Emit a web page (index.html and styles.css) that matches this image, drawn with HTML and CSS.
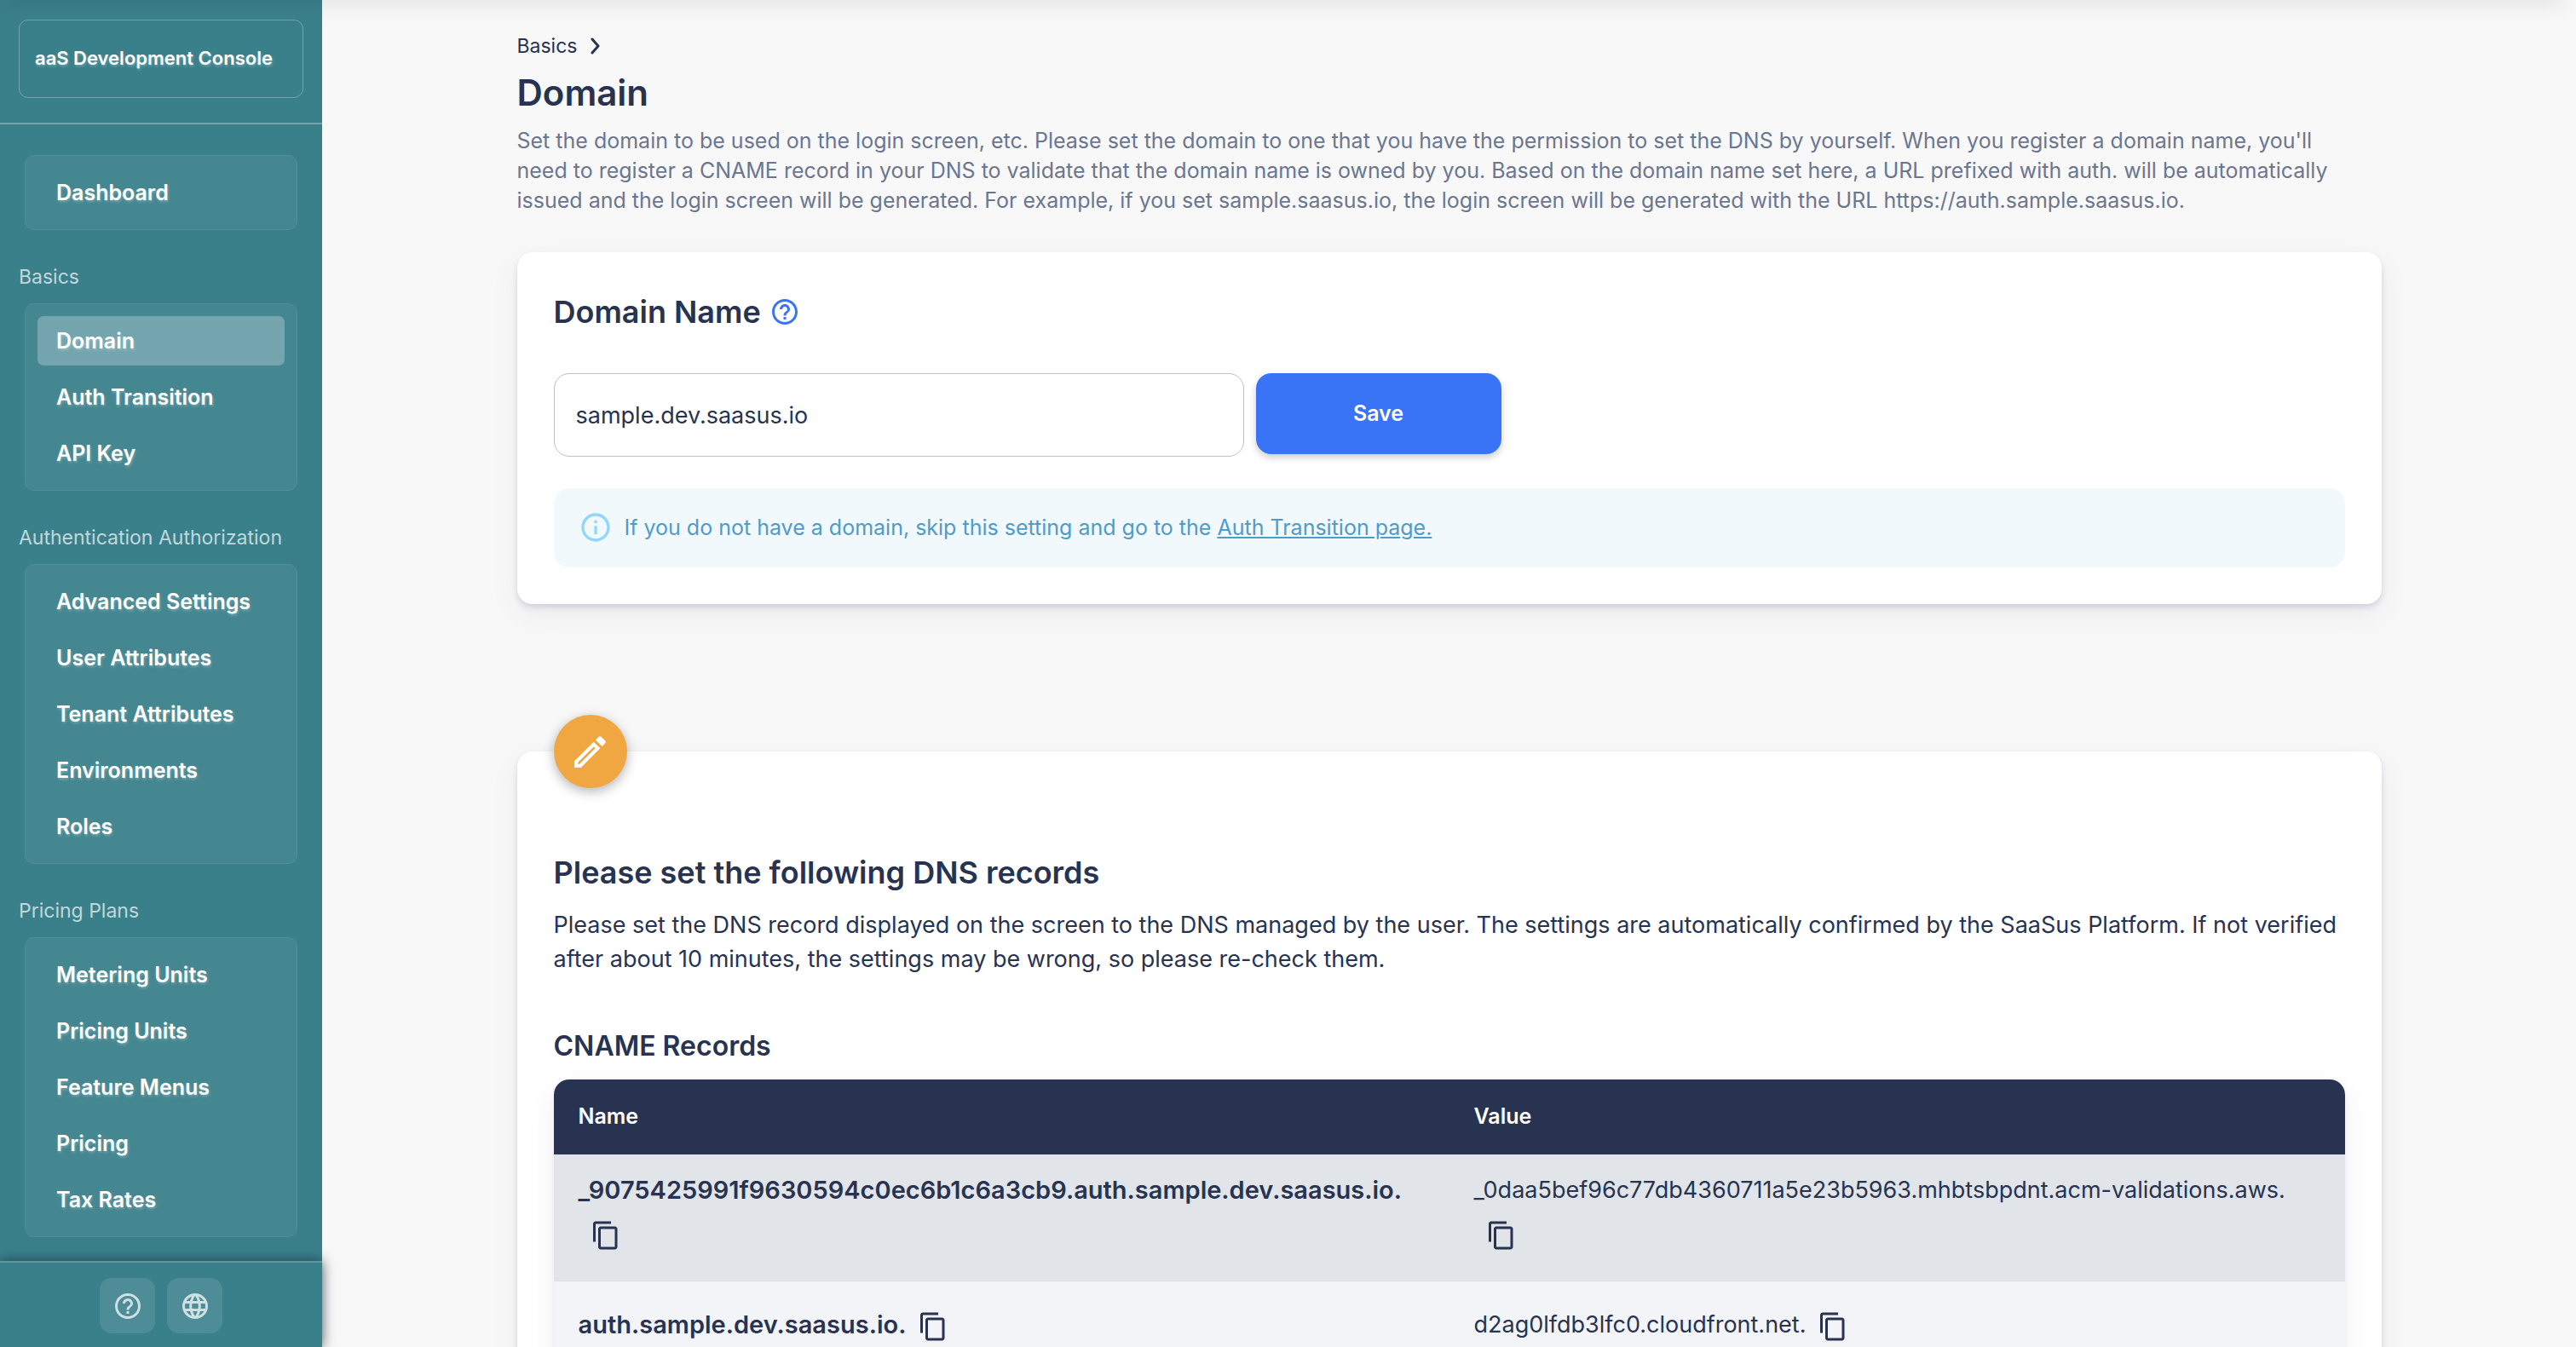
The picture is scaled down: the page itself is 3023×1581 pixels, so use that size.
FILE: index.html
```html
<!DOCTYPE html>
<html lang="en">
<head>
<meta charset="utf-8">
<meta name="viewport" content="width=device-width, initial-scale=1">
<title>Domain - SaaS Development Console</title>
<link rel="stylesheet" href="styles.css">
</head>
<body>
<svg class="sprite" aria-hidden="true">
  <symbol id="icon-help" viewBox="0 0 24 24"><path d="M11 18h2v-2h-2v2zm1-16C6.480 2 2 6.480 2 12s4.480 10 10 10 10-4.480 10-10S17.520 2 12 2zm0 18c-4.410 0-8-3.590-8-8s3.590-8 8-8 8 3.590 8 8-3.590 8-8 8zm0-14c-2.210 0-4 1.790-4 4h2c0-1.100.9-2 2-2s2 .9 2 2c0 2-3 1.750-3 5h2c0-2.250 3-2.500 3-5 0-2.210-1.790-4-4-4z"/></symbol>
  <symbol id="icon-info" viewBox="0 0 24 24"><path d="M11 7h2v2h-2zm0 4h2v6h-2zm1-9C6.480 2 2 6.480 2 12s4.480 10 10 10 10-4.480 10-10S17.520 2 12 2zm0 18c-4.410 0-8-3.590-8-8s3.590-8 8-8 8 3.590 8 8-3.590 8-8 8z"/></symbol>
  <symbol id="icon-globe" viewBox="0 0 24 24"><path d="M11.990 2C6.470 2 2 6.480 2 12s4.470 10 9.990 10C17.520 22 22 17.520 22 12S17.520 2 11.990 2zm6.930 6h-2.950c-.32-1.250-.78-2.450-1.380-3.560 1.840.63 3.370 1.910 4.330 3.560zM12 4.040c.83 1.200 1.480 2.530 1.910 3.960h-3.820c.43-1.430 1.080-2.760 1.910-3.960zM4.260 14C4.100 13.360 4 12.690 4 12s.1-1.360.26-2h3.380c-.08.66-.14 1.320-.14 2s.06 1.340.14 2H4.260zm.82 2h2.950c.32 1.250.78 2.450 1.380 3.560-1.840-.63-3.370-1.900-4.330-3.560zm2.950-8H5.080c.96-1.660 2.490-2.930 4.330-3.560C8.810 5.550 8.350 6.750 8.030 8zM12 19.960c-.83-1.200-1.480-2.530-1.910-3.960h3.820c-.43 1.430-1.080 2.760-1.910 3.960zM14.340 14H9.660c-.09-.66-.16-1.320-.16-2s.07-1.350.16-2h4.680c.09.65.16 1.320.16 2s-.07 1.340-.16 2zm.25 5.560c.6-1.110 1.060-2.310 1.380-3.560h2.950c-.96 1.650-2.490 2.930-4.330 3.560zM16.360 14c.08-.66.14-1.320.14-2s-.06-1.340-.14-2h3.380c.16.64.26 1.310.26 2s-.1 1.360-.26 2h-3.380z"/></symbol>
  <symbol id="icon-copy" viewBox="0 0 24 24"><path d="M16 1H4c-1.100 0-2 .9-2 2v14h2V3h12V1zm3 4H8c-1.100 0-2 .9-2 2v14c0 1.100.9 2 2 2h11c1.100 0 2-.9 2-2V7c0-1.100-.9-2-2-2zm0 16H8V7h11v14z"/></symbol>
  <symbol id="icon-edit" viewBox="0 0 24 24"><path d="M14.060 9.020l.92.92L5.920 19H5v-.92l9.060-9.060M17.660 3c-.25 0-.51.1-.7.290l-1.830 1.830 3.750 3.750 1.830-1.830c.39-.39.39-1.020 0-1.410l-2.340-2.340c-.2-.2-.45-.29-.71-.29zm-3.600 3.190L3 17.250V21h3.750L17.810 9.940l-3.750-3.750z"/></symbol>
</svg>
<div class="topbar"></div>
<div class="layout">
  <aside class="sidebar">
    <header class="sidebar-header">
      <a class="brand" href="#">aaS Development Console</a>
    </header>
    <nav class="menu" aria-label="Main">
      <ul class="menu-group">
        <li><a class="menu-item" href="#">Dashboard</a></li>
      </ul>
      <h2 class="menu-label">Basics</h2>
      <ul class="menu-group">
        <li><a class="menu-item menu-item-active" href="#" aria-current="page">Domain</a></li>
        <li><a class="menu-item" href="#">Auth Transition</a></li>
        <li><a class="menu-item" href="#">API Key</a></li>
      </ul>
      <h2 class="menu-label">Authentication Authorization</h2>
      <ul class="menu-group">
        <li><a class="menu-item" href="#">Advanced Settings</a></li>
        <li><a class="menu-item" href="#">User Attributes</a></li>
        <li><a class="menu-item" href="#">Tenant Attributes</a></li>
        <li><a class="menu-item" href="#">Environments</a></li>
        <li><a class="menu-item" href="#">Roles</a></li>
      </ul>
      <h2 class="menu-label">Pricing Plans</h2>
      <ul class="menu-group">
        <li><a class="menu-item" href="#">Metering Units</a></li>
        <li><a class="menu-item" href="#">Pricing Units</a></li>
        <li><a class="menu-item" href="#">Feature Menus</a></li>
        <li><a class="menu-item" href="#">Pricing</a></li>
        <li><a class="menu-item" href="#">Tax Rates</a></li>
      </ul>
    </nav>
    <footer class="sidebar-footer">
      <button class="tool" type="button" aria-label="Help"><svg class="icon"><use href="#icon-help"/></svg></button>
      <button class="tool" type="button" aria-label="Language"><svg class="icon"><use href="#icon-globe"/></svg></button>
    </footer>
  </aside>
  <main class="main">
    <div class="container">
      <nav class="breadcrumb" aria-label="Breadcrumb">
        <a href="#">Basics</a>
        <svg class="chevron" viewBox="0 0 12 20"><path d="M2 2l7 8-7 8" fill="none" stroke="currentColor" stroke-width="3" stroke-linecap="round" stroke-linejoin="round"/></svg>
      </nav>
      <h1 class="title">Domain</h1>
      <p class="description">Set the domain to be used on the login screen, etc. Please set the domain to one that you have the permission to set the DNS by yourself. When you register a domain name, you'll need to register a CNAME record in your DNS to validate that the domain name is owned by you. Based on the domain name set here, a URL prefixed with auth. will be automatically issued and the login screen will be generated. For example, if you set sample.saasus.io, the login screen will be generated with the URL https://auth.sample.saasus.io.</p>

      <section class="card">
        <div class="card-heading">
          <h2 class="heading"><label for="domain">Domain Name</label></h2>
          <button class="help" type="button" aria-label="About the domain name"><svg class="icon"><use href="#icon-help"/></svg></button>
        </div>
        <form class="domain-form">
          <input class="field" id="domain" type="text" value="sample.dev.saasus.io">
          <button class="save" type="submit">Save</button>
        </form>
        <div class="notice">
          <svg class="notice-icon"><use href="#icon-info"/></svg>
          <p>If you do not have a domain, skip this setting and go to the <a href="#">Auth Transition page.</a></p>
        </div>
      </section>

      <section class="card card-records">
        <div class="badge"><svg class="badge-icon"><use href="#icon-edit"/></svg></div>
        <h2 class="heading">Please set the following DNS records</h2>
        <p class="lead">Please set the DNS record displayed on the screen to the DNS managed by the user. The settings are automatically confirmed by the SaaSus Platform. If not verified after about 10 minutes, the settings may be wrong, so please re-check them.</p>
        <h3 class="subheading" id="cname">CNAME Records</h3>
        <div class="table-frame">
          <table class="records" aria-labelledby="cname">
            <thead>
              <tr><th scope="col">Name</th><th scope="col">Value</th></tr>
            </thead>
            <tbody>
              <tr>
                <th scope="row">_9075425991f9630594c0ec6b1c6a3cb9.auth.sample.dev.saasus.io.<button class="copy" type="button" aria-label="Copy name"><svg class="icon"><use href="#icon-copy"/></svg></button></th>
                <td>_0daa5bef96c77db4360711a5e23b5963.mhbtsbpdnt.acm-validations.aws.<button class="copy" type="button" aria-label="Copy value"><svg class="icon"><use href="#icon-copy"/></svg></button></td>
              </tr>
              <tr>
                <th scope="row">auth.sample.dev.saasus.io.<button class="copy" type="button" aria-label="Copy name"><svg class="icon"><use href="#icon-copy"/></svg></button></th>
                <td>d2ag0lfdb3lfc0.cloudfront.net.<button class="copy" type="button" aria-label="Copy value"><svg class="icon"><use href="#icon-copy"/></svg></button></td>
              </tr>
            </tbody>
          </table>
        </div>
      </section>
    </div>
  </main>
</div>
</body>
</html>
```
FILE: styles.css
```css
:root {
  --navy: #273351;
  --teal: #3a808b;
  --blue: #3974f6;
}

* {
  box-sizing: border-box;
  margin: 0;
  padding: 0;
}

body {
  font-family: Inter, "Liberation Sans", sans-serif;
  font-size: 25px;
  line-height: 35px;
  color: var(--navy);
  background: #f8f8f8;
  -webkit-font-smoothing: antialiased;
}

a {
  color: inherit;
  text-decoration: none;
}

button,
input {
  font: inherit;
  color: inherit;
  border: 0;
  background: none;
}

button {
  cursor: pointer;
}

ul {
  list-style: none;
}

svg {
  display: block;
  fill: currentColor;
}

.sprite {
  display: none;
}

.icon {
  width: 36px;
  height: 36px;
}

.layout {
  display: flex;
  height: 100vh;
}

/* Shadow cast over the top edge of the page */
.topbar {
  position: absolute;
  top: -10px;
  left: 0;
  right: 14px;
  height: 10px;
  box-shadow: 0 0 28px rgba(0, 0, 0, 0.2);
  z-index: 3;
}

/* Sidebar */

.sidebar {
  display: flex;
  flex-direction: column;
  flex: none;
  width: 378px;
  color: #fff;
  background: var(--teal);
  position: relative;
  z-index: 2;
}

.sidebar-header {
  padding: 23px 22px 29px;
  border-bottom: 2px solid #74a5ae;
}

.brand {
  display: block;
  padding: 27px 18px 28px;
  border: 1px solid #74a5ae;
  border-radius: 11px;
  font-size: 22px;
  font-weight: 600;
  text-shadow: 1px 2px 3px rgba(255, 255, 255, 0.25);
}

.menu {
  flex: 1;
  min-height: 0;
  padding: 36px 29px 28px;
  overflow-y: auto;
  scrollbar-width: none;
}

.menu-group {
  display: grid;
  gap: 8px;
  padding: 14px;
  border: 1px solid #4f909a;
  border-radius: 11px;
  background: #458791;
}

.menu-item {
  display: block;
  height: 58px;
  padding: 0 22px;
  border-radius: 7px;
  font-weight: 600;
  line-height: 58px;
  text-shadow: 1px 2px 3px rgba(255, 255, 255, 0.25);
}

.menu-item-active {
  background: #74a5ae;
}

.menu-label {
  margin: 41px 0 17px -7px;
  font-size: 23px;
  font-weight: 400;
  line-height: 28px;
  white-space: nowrap;
  color: #c0d8dc;
}

.sidebar-footer {
  display: flex;
  justify-content: center;
  gap: 14px;
  padding: 18px 0 16px;
  border-top: 2px solid #5f98a1;
  background: var(--teal);
  box-shadow: 0 0 14px rgba(21, 50, 60, 0.8);
  clip-path: inset(-20px -20px 0 0);
}

.tool {
  display: grid;
  place-items: center;
  width: 65px;
  height: 65px;
  border-radius: 14px;
  color: #cee0e3;
  background: #4e8d97;
}

/* Content */

.main {
  flex: 1;
  min-width: 0;
  padding: 40px 28px 86px;
  overflow-y: auto;
  scrollbar-width: none;
}

.container {
  max-width: 2188px;
  margin: 0 auto;
}

.breadcrumb {
  display: flex;
  align-items: center;
  gap: 16px;
  font-size: 23px;
  line-height: 28px;
}

.chevron {
  width: 12px;
  height: 20px;
}

.title {
  margin-top: 16px;
  font-size: 42px;
  font-weight: 600;
  line-height: 50px;
}

.description {
  margin-top: 14px;
  padding-right: 48px;
  color: #6b7690;
}

.card {
  margin-top: 43px;
  padding: 45px 43px 43px;
  border-radius: 18px;
  background: #fff;
  box-shadow: 0 4px 6px rgba(60, 60, 110, 0.16), 0 12px 34px rgba(60, 60, 110, 0.07);
}

.card-heading {
  display: flex;
  align-items: center;
  gap: 10px;
}

.heading {
  font-size: 36px;
  font-weight: 600;
  line-height: 50px;
}

.help {
  color: var(--blue);
}

.domain-form {
  display: flex;
  gap: 14px;
  margin-top: 47px;
}

.field {
  flex: 0 1 810px;
  min-width: 0;
  height: 98px;
  padding: 0 25px;
  border: 1px solid #c0c0c0;
  border-radius: 18px;
  font-size: 27px;
  background: #fff;
}

.save {
  flex: none;
  width: 288px;
  height: 95px;
  border-radius: 18px;
  font-weight: 600;
  color: #fff;
  background: var(--blue);
  box-shadow: 0 4px 8px rgba(0, 0, 0, 0.2);
}

.notice {
  display: flex;
  align-items: center;
  gap: 14px;
  margin-top: 37px;
  padding: 26px 29px 27px;
  border-radius: 18px;
  color: #4f9bcb;
  background: #f1f9fd;
}

.notice a {
  text-decoration: underline;
}

.notice-icon {
  flex: none;
  width: 40px;
  height: 40px;
  color: #93d5fd;
}

/* DNS records */

.card-records {
  position: relative;
  margin-top: 173px;
  padding-top: 117px;
}

.badge {
  position: absolute;
  top: -43px;
  left: 43px;
  display: grid;
  place-items: center;
  width: 86px;
  height: 86px;
  border-radius: 50%;
  color: #fff;
  background: #f0a742;
  box-shadow: 0 4px 14px rgba(0, 0, 0, 0.3);
}

.badge-icon {
  width: 49px;
  height: 49px;
}

.lead {
  margin-top: 17px;
  font-size: 27px;
  line-height: 40px;
}

.subheading {
  margin-top: 62px;
  font-size: 32px;
  font-weight: 600;
  line-height: 40px;
}

.table-frame {
  margin-top: 19px;
  border-radius: 18px;
  overflow: hidden;
  box-shadow: 0 4px 6px rgba(60, 60, 110, 0.08), 0 14px 32px rgba(60, 60, 110, 0.08);
}

.records {
  width: 100%;
  table-layout: fixed;
  border-collapse: collapse;
  font-size: 27px;
  line-height: 42px;
  text-align: left;
}

.records thead th {
  padding: 22px 29px 24px;
  font-size: 25px;
  font-weight: 600;
  color: #fff;
  background: var(--navy);
}

.records tbody th,
.records tbody td {
  padding: 21px 29px;
  vertical-align: top;
}

.records tbody th {
  font-size: 29px;
  font-weight: 600;
}

.records tbody td {
  font-weight: 400;
}

.records tbody tr {
  border-bottom: 1px solid #dcdfe4;
  background: #f3f4f8;
}

.records tbody tr:nth-child(odd) {
  background: #e1e4e8;
}

.copy {
  display: inline-block;
  padding: 14px;
  vertical-align: middle;
}
```
